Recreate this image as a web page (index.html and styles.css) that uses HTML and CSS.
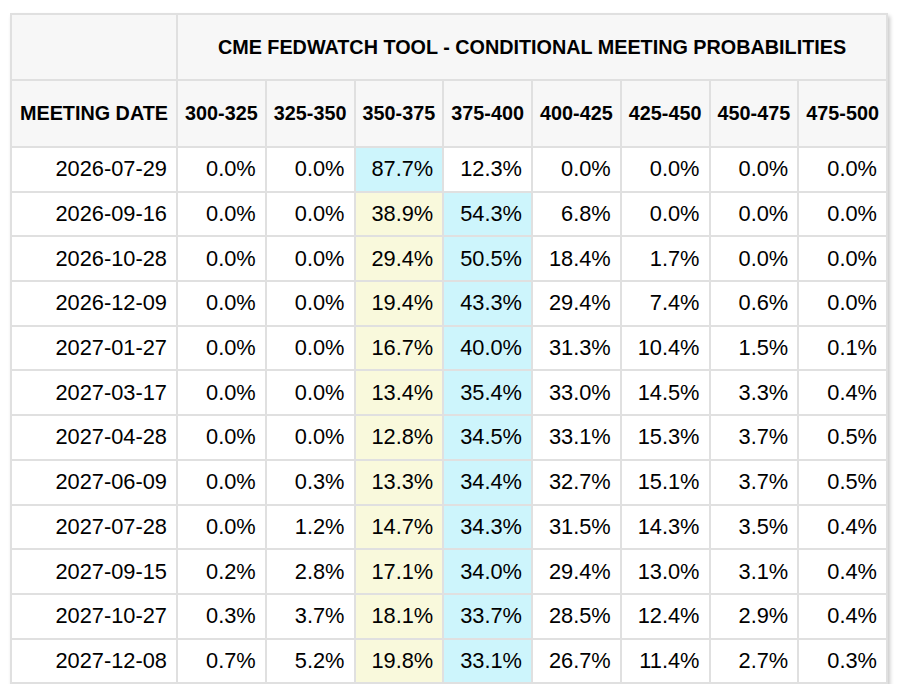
FILE: index.html
```html
<!DOCTYPE html>
<html>
<head>
<meta charset="utf-8">
<link rel="stylesheet" href="styles.css">
</head>
<body>
<div class="wrap">
<table class="fw">
<colgroup>
<col class="c-date"><col><col><col><col><col><col><col><col>
</colgroup>
<thead>
<tr class="h1"><th class="blank"></th><th colspan="8">CME FEDWATCH TOOL - CONDITIONAL MEETING PROBABILITIES</th></tr>
<tr class="h2"><th>MEETING DATE</th><th>300-325</th><th>325-350</th><th>350-375</th><th>375-400</th><th>400-425</th><th>425-450</th><th>450-475</th><th>475-500</th></tr>
</thead>
<tbody>
<tr><td>2026-07-29</td><td>0.0%</td><td>0.0%</td><td class="cy">87.7%</td><td>12.3%</td><td>0.0%</td><td>0.0%</td><td>0.0%</td><td>0.0%</td></tr>
<tr><td>2026-09-16</td><td>0.0%</td><td>0.0%</td><td class="yl">38.9%</td><td class="cy">54.3%</td><td>6.8%</td><td>0.0%</td><td>0.0%</td><td>0.0%</td></tr>
<tr><td>2026-10-28</td><td>0.0%</td><td>0.0%</td><td class="yl">29.4%</td><td class="cy">50.5%</td><td>18.4%</td><td>1.7%</td><td>0.0%</td><td>0.0%</td></tr>
<tr><td>2026-12-09</td><td>0.0%</td><td>0.0%</td><td class="yl">19.4%</td><td class="cy">43.3%</td><td>29.4%</td><td>7.4%</td><td>0.6%</td><td>0.0%</td></tr>
<tr><td>2027-01-27</td><td>0.0%</td><td>0.0%</td><td class="yl">16.7%</td><td class="cy">40.0%</td><td>31.3%</td><td>10.4%</td><td>1.5%</td><td>0.1%</td></tr>
<tr><td>2027-03-17</td><td>0.0%</td><td>0.0%</td><td class="yl">13.4%</td><td class="cy">35.4%</td><td>33.0%</td><td>14.5%</td><td>3.3%</td><td>0.4%</td></tr>
<tr><td>2027-04-28</td><td>0.0%</td><td>0.0%</td><td class="yl">12.8%</td><td class="cy">34.5%</td><td>33.1%</td><td>15.3%</td><td>3.7%</td><td>0.5%</td></tr>
<tr><td>2027-06-09</td><td>0.0%</td><td>0.3%</td><td class="yl">13.3%</td><td class="cy">34.4%</td><td>32.7%</td><td>15.1%</td><td>3.7%</td><td>0.5%</td></tr>
<tr><td>2027-07-28</td><td>0.0%</td><td>1.2%</td><td class="yl">14.7%</td><td class="cy">34.3%</td><td>31.5%</td><td>14.3%</td><td>3.5%</td><td>0.4%</td></tr>
<tr><td>2027-09-15</td><td>0.2%</td><td>2.8%</td><td class="yl">17.1%</td><td class="cy">34.0%</td><td>29.4%</td><td>13.0%</td><td>3.1%</td><td>0.4%</td></tr>
<tr><td>2027-10-27</td><td>0.3%</td><td>3.7%</td><td class="yl">18.1%</td><td class="cy">33.7%</td><td>28.5%</td><td>12.4%</td><td>2.9%</td><td>0.4%</td></tr>
<tr><td>2027-12-08</td><td>0.7%</td><td>5.2%</td><td class="yl">19.8%</td><td class="cy">33.1%</td><td>26.7%</td><td>11.4%</td><td>2.7%</td><td>0.3%</td></tr>
</tbody>
</table>
</div>
</body>
</html>
```
FILE: styles.css
```css
html, body {
  margin: 0;
  padding: 0;
  background: #ffffff;
}
body {
  font-family: "Liberation Sans", Arial, Helvetica, sans-serif;
  color: #000;
}
.wrap {
  padding: 13px 0 0 10px;
}
.fw {
  border-collapse: collapse;
  table-layout: fixed;
  width: 878px;
  box-shadow: 2px 3px 4px rgba(0, 0, 0, 0.22);
  background: #fff;
}
.c-date {
  width: 166px;
}
.fw th, .fw td {
  border: 2px solid #e0e0e0;
  padding: 0;
}
.fw th {
  background: #f7f7f7;
  font-weight: bold;
  font-size: 19.8px;
  text-align: center;
  white-space: nowrap;
}
.h1 th {
  height: 64px;
}
.h2 th {
  height: 65px;
}
.fw td {
  font-size: 21.8px;
  text-align: right;
  padding-right: 9px;
  height: 42.7px;
  white-space: nowrap;
}
.fw td.cy {
  background: #cdf5fc;
}
.fw td.yl {
  background: #f9f9dc;
}
```
